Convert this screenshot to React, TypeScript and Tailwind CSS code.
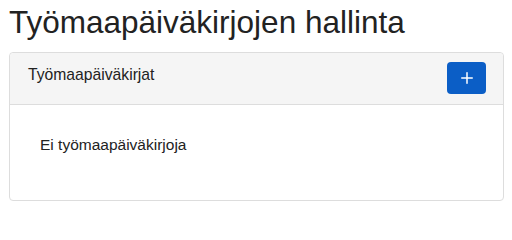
import { Plus } from "lucide-react";

export default function App() {
  return (
    <div className="w-[512px] h-[212px] bg-white pl-[9px] pr-[8px] text-[#333] [font-family:'Liberation_Sans',Arial,sans-serif]">
      <h1 className="pt-[5px] text-[31.5px] leading-[34px] font-normal text-[#222]">
        Työmaapäiväkirjojen hallinta
      </h1>
      <div className="mt-[13px] h-[149px] rounded-[4px] border border-[#ddd] flex flex-col">
        <div className="h-[52px] flex justify-between items-start bg-[#f5f5f5] border-b border-[#ddd] rounded-t-[4px] pl-[18px] pr-[17px] pt-[9px]">
          <span className="text-[15.7px] leading-[22px] mt-[2px] text-[#222]">Työmaapäiväkirjat</span>
          <button className="w-[39px] h-[32px] rounded-[4px] bg-[#0b5ec6] text-white flex items-center justify-center">
            <Plus size={18} strokeWidth={2} />
          </button>
        </div>
        <div className="pl-[30px] pt-[29px]">
          <p className="text-[15.5px] leading-[22px] text-[#222]">Ei työmaapäiväkirjoja</p>
        </div>
      </div>
    </div>
  );
}
